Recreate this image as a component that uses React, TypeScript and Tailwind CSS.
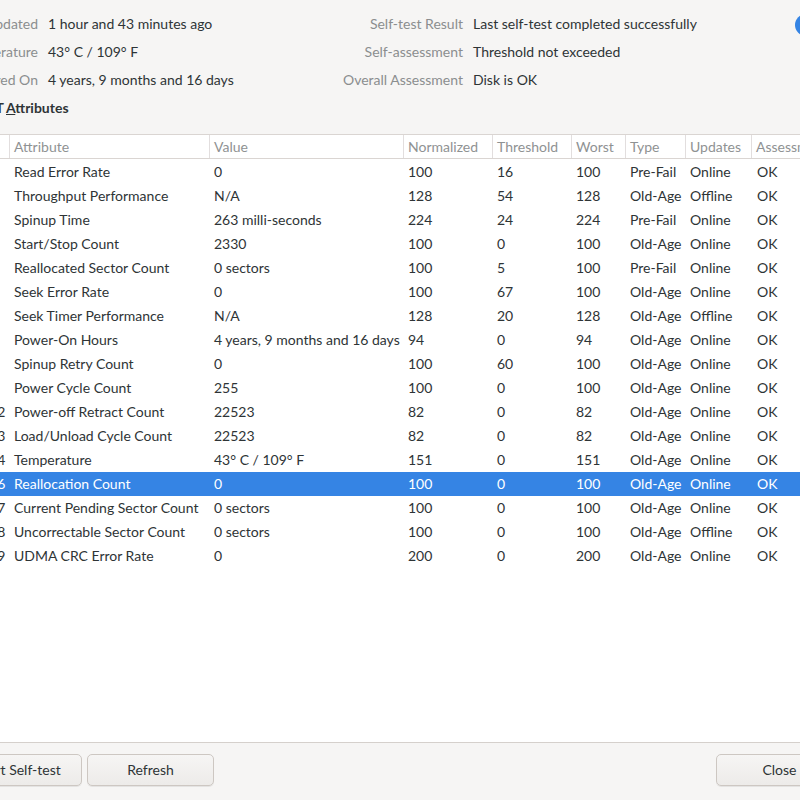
const rows: [string, string, string, string, string, string, string, string][] = [
  ["1", "Read Error Rate", "0", "100", "16", "100", "Pre-Fail", "Online"],
  ["2", "Throughput Performance", "N/A", "128", "54", "128", "Old-Age", "Offline"],
  ["3", "Spinup Time", "263 milli-seconds", "224", "24", "224", "Pre-Fail", "Online"],
  ["4", "Start/Stop Count", "2330", "100", "0", "100", "Old-Age", "Online"],
  ["5", "Reallocated Sector Count", "0 sectors", "100", "5", "100", "Pre-Fail", "Online"],
  ["7", "Seek Error Rate", "0", "100", "67", "100", "Old-Age", "Online"],
  ["8", "Seek Timer Performance", "N/A", "128", "20", "128", "Old-Age", "Offline"],
  ["9", "Power-On Hours", "4 years, 9 months and 16 days", "94", "0", "94", "Old-Age", "Online"],
  ["10", "Spinup Retry Count", "0", "100", "60", "100", "Old-Age", "Online"],
  ["12", "Power Cycle Count", "255", "100", "0", "100", "Old-Age", "Online"],
  ["192", "Power-off Retract Count", "22523", "82", "0", "82", "Old-Age", "Online"],
  ["193", "Load/Unload Cycle Count", "22523", "82", "0", "82", "Old-Age", "Online"],
  ["194", "Temperature", "43° C / 109° F", "151", "0", "151", "Old-Age", "Online"],
  ["196", "Reallocation Count", "0", "100", "0", "100", "Old-Age", "Online"],
  ["197", "Current Pending Sector Count", "0 sectors", "100", "0", "100", "Old-Age", "Online"],
  ["198", "Uncorrectable Sector Count", "0 sectors", "100", "0", "100", "Old-Age", "Offline"],
  ["199", "UDMA CRC Error Rate", "0", "200", "0", "200", "Old-Age", "Online"],
];

const headers = ["ID", "Attribute", "Value", "Normalized", "Threshold", "Worst", "Type", "Updates", "Assessment"];

const cols = "grid grid-cols-[39px_200px_194px_89px_79px_54px_60px_66px_120px]";

function Info({ label, value }: { label: string; value: string }) {
  return (
    <>
      <div className="text-right text-[#8b8e8f] whitespace-nowrap">{label}</div>
      <div className="whitespace-nowrap">{value}</div>
    </>
  );
}

function Button({ children, className = "" }: { children: React.ReactNode; className?: string }) {
  return (
    <button
      className={`h-[32px] w-[127px] shrink-0 pb-[2px] rounded-[5px] border border-[#cdc7c2] bg-gradient-to-b from-[#f6f5f4] to-[#edebe9] shadow-[0_1px_0_rgba(0,0,0,0.07)] text-[#2e3436] ${className}`}
    >
      {children}
    </button>
  );
}

export default function App() {
  return (
    <div className="w-[800px] h-[800px] overflow-hidden flex flex-col bg-[#f6f5f4] text-[#2e3436] font-['Lato',sans-serif] text-[14px]">
      <div className="pt-[9px]">
        <div className="-ml-[82px] grid grid-cols-[120px_270px_135px_312px_48px] gap-x-[10px] auto-rows-[28px] items-center">
          <Info label="Last Updated" value="1 hour and 43 minutes ago" />
          <Info label="Self-test Result" value="Last self-test completed successfully" />
          <div className="mt-[4px] h-[22px] w-[48px] rounded-full bg-[#3584e4]" />
          <Info label="Temperature" value="43° C / 109° F" />
          <Info label="Self-assessment" value="Threshold not exceeded" />
          <div />
          <Info label="Powered On" value="4 years, 9 months and 16 days" />
          <Info label="Overall Assessment" value="Disk is OK" />
          <div />
        </div>
        <div className="mt-[4px] mb-[17px] h-[20px] flex items-center font-bold whitespace-nowrap">
          <span className="-ml-[56px] w-[60px] text-right">SMART</span>
          <span className="ml-[2px]">
            <span className="underline">A</span>ttributes
          </span>
        </div>
      </div>

      <div className="flex-1 bg-white border-t border-[#dad5d2] overflow-hidden">
        <div className="-ml-[30px] w-[900px]">
          <div className={`${cols} h-[24px] border-b border-[#dad5d2] text-[#8f9293]`}>
            {headers.map((h, i) => (
              <div
                key={h}
                className={`flex items-center whitespace-nowrap ${i > 0 ? "border-l border-[#e2dede]" : ""} ${i === 0 ? "pl-[11px]" : i === 1 ? "pl-[4px]" : "pl-[4px]"}`}
              >
                {h}
              </div>
            ))}
          </div>
          <div className="pt-[1px]">
            {rows.map((r) => {
              const sel = r[0] === "196";
              return (
                <div
                  key={r[0]}
                  className={`${cols} h-[24px] pb-[2px] items-center whitespace-nowrap ${sel ? "bg-[#3584e4] text-white" : ""}`}
                >
                  <div className="pl-[11px]">{r[0]}</div>
                  <div className="pl-[5px]">{r[1]}</div>
                  <div className="pl-[5px]">{r[2]}</div>
                  <div className="pl-[5px]">{r[3]}</div>
                  <div className="pl-[5px]">{r[4]}</div>
                  <div className="pl-[5px]">{r[5]}</div>
                  <div className="pl-[5px]">{r[6]}</div>
                  <div className="pl-[5px]">{r[7]}</div>
                  <div className="pl-[6px]">OK</div>
                </div>
              );
            })}
          </div>
        </div>
      </div>

      <div className="h-[58px] shrink-0 border-t border-[#d5d0cc] flex items-start pt-[11px] gap-[5px]">
        <Button className="-ml-[45px]">Start Self-test</Button>
        <Button>Refresh</Button>
        <Button className="ml-auto -mr-[43px]">Close</Button>
      </div>
    </div>
  );
}
